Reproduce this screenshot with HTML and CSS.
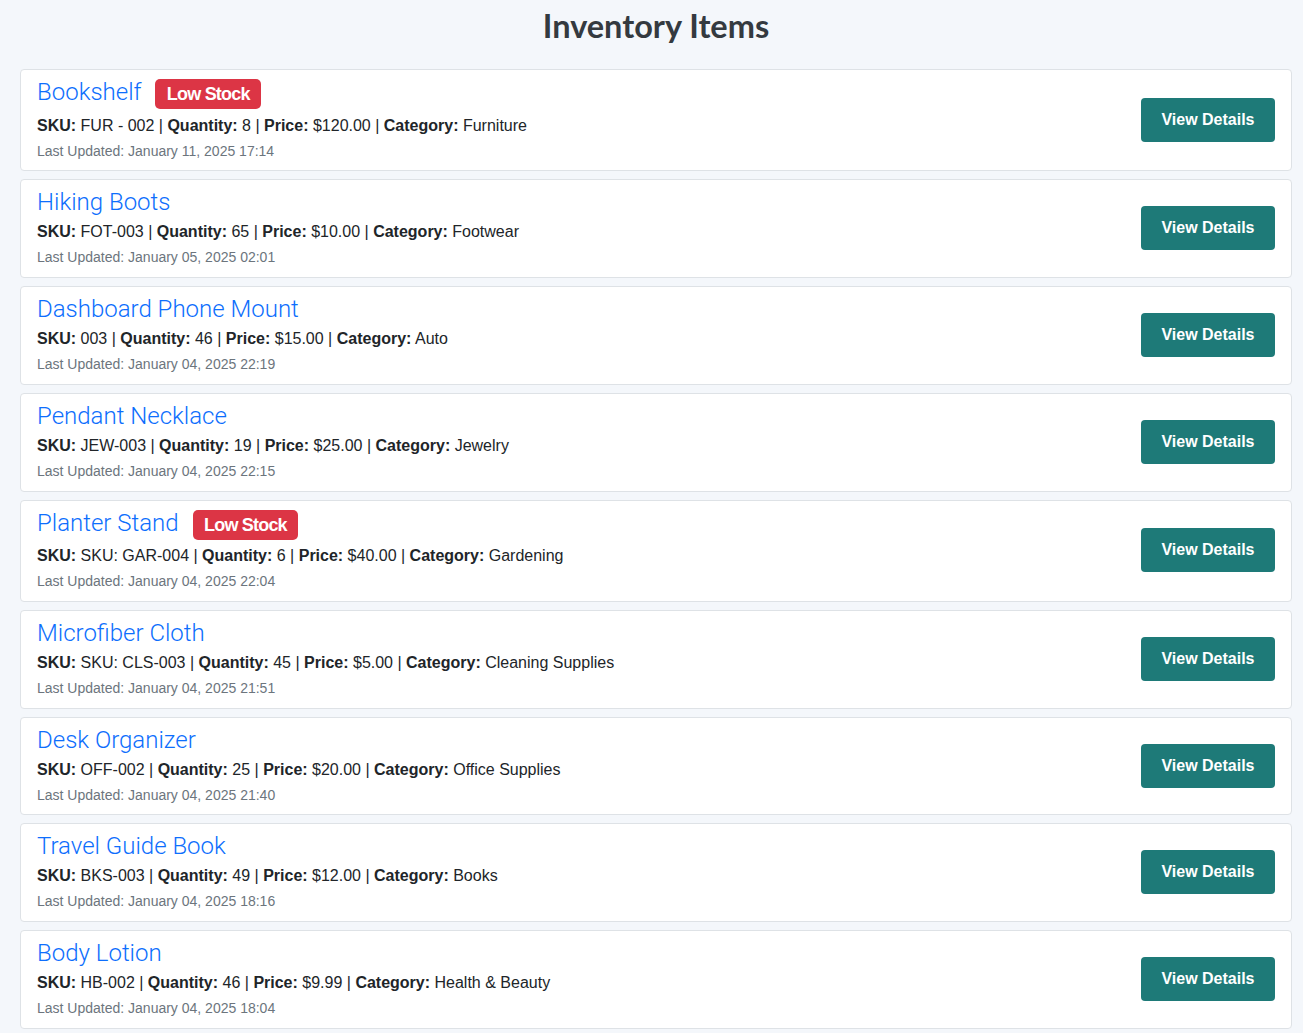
FILE: index.html
```html
<!DOCTYPE html>
<html lang="en">
<head>
<meta charset="utf-8">
<title>Inventory Items</title>
<link rel="stylesheet" href="styles.css">
</head>
<body>
<div class="page">
<h1 class="page-title">Inventory Items</h1>
<div class="list">
  <div class="card">
    <div class="info">
      <h3 class="name">Bookshelf <span class="badge">Low Stock</span></h3>
      <p class="details"><b>SKU:</b> FUR - 002 | <b>Quantity:</b> 8 | <b>Price:</b> $120.00 | <b>Category:</b> Furniture</p>
      <p class="updated">Last Updated: January 11, 2025 17:14</p>
    </div>
    <a class="btn" href="#">View Details</a>
  </div>
  <div class="card">
    <div class="info">
      <h3 class="name">Hiking Boots</h3>
      <p class="details"><b>SKU:</b> FOT-003 | <b>Quantity:</b> 65 | <b>Price:</b> $10.00 | <b>Category:</b> Footwear</p>
      <p class="updated">Last Updated: January 05, 2025 02:01</p>
    </div>
    <a class="btn" href="#">View Details</a>
  </div>
  <div class="card">
    <div class="info">
      <h3 class="name">Dashboard Phone Mount</h3>
      <p class="details"><b>SKU:</b> 003 | <b>Quantity:</b> 46 | <b>Price:</b> $15.00 | <b>Category:</b> Auto</p>
      <p class="updated">Last Updated: January 04, 2025 22:19</p>
    </div>
    <a class="btn" href="#">View Details</a>
  </div>
  <div class="card">
    <div class="info">
      <h3 class="name">Pendant Necklace</h3>
      <p class="details"><b>SKU:</b> JEW-003 | <b>Quantity:</b> 19 | <b>Price:</b> $25.00 | <b>Category:</b> Jewelry</p>
      <p class="updated">Last Updated: January 04, 2025 22:15</p>
    </div>
    <a class="btn" href="#">View Details</a>
  </div>
  <div class="card">
    <div class="info">
      <h3 class="name">Planter Stand <span class="badge">Low Stock</span></h3>
      <p class="details"><b>SKU:</b> SKU: GAR-004 | <b>Quantity:</b> 6 | <b>Price:</b> $40.00 | <b>Category:</b> Gardening</p>
      <p class="updated">Last Updated: January 04, 2025 22:04</p>
    </div>
    <a class="btn" href="#">View Details</a>
  </div>
  <div class="card">
    <div class="info">
      <h3 class="name">Microfiber Cloth</h3>
      <p class="details"><b>SKU:</b> SKU: CLS-003 | <b>Quantity:</b> 45 | <b>Price:</b> $5.00 | <b>Category:</b> Cleaning Supplies</p>
      <p class="updated">Last Updated: January 04, 2025 21:51</p>
    </div>
    <a class="btn" href="#">View Details</a>
  </div>
  <div class="card">
    <div class="info">
      <h3 class="name">Desk Organizer</h3>
      <p class="details"><b>SKU:</b> OFF-002 | <b>Quantity:</b> 25 | <b>Price:</b> $20.00 | <b>Category:</b> Office Supplies</p>
      <p class="updated">Last Updated: January 04, 2025 21:40</p>
    </div>
    <a class="btn" href="#">View Details</a>
  </div>
  <div class="card">
    <div class="info">
      <h3 class="name">Travel Guide Book</h3>
      <p class="details"><b>SKU:</b> BKS-003 | <b>Quantity:</b> 49 | <b>Price:</b> $12.00 | <b>Category:</b> Books</p>
      <p class="updated">Last Updated: January 04, 2025 18:16</p>
    </div>
    <a class="btn" href="#">View Details</a>
  </div>
  <div class="card">
    <div class="info">
      <h3 class="name">Body Lotion</h3>
      <p class="details"><b>SKU:</b> HB-002 | <b>Quantity:</b> 46 | <b>Price:</b> $9.99 | <b>Category:</b> Health &amp; Beauty</p>
      <p class="updated">Last Updated: January 04, 2025 18:04</p>
    </div>
    <a class="btn" href="#">View Details</a>
  </div>
</div>
</div>
</body>
</html>
```
FILE: styles.css
```css
* { box-sizing: border-box; }

body {
  margin: 0;
  background: #f4f7fb;
  font-family: "Liberation Sans", Arial, sans-serif;
  color: #212529;
}

.page {
  margin: 0 11px 0 20px;
}

.page-title {
  margin: 6px 0 24px;
  text-align: center;
  font-family: Lato, sans-serif;
  font-weight: 700;
  font-size: 32.5px;
  line-height: 1.2;
  color: #343a40;
}

.list {
  display: flex;
  flex-direction: column;
  gap: 8px;
}

.card {
  display: flex;
  align-items: center;
  justify-content: space-between;
  background: #fff;
  border: 1px solid #dee2e6;
  border-radius: 4px;
  padding: 8px 16px 8.75px;
}

.name {
  margin: 0 0 3px;
  font-family: Roboto, sans-serif;
  font-weight: 300;
  font-size: 24px;
  line-height: 29px;
  color: #0d6efd;
}

.badge {
  display: inline-block;
  margin: 0 0 1.5px 8px;
  padding: 6px 11.5px;
  font-family: "Liberation Sans", Arial, sans-serif;
  font-size: 18px;
  font-weight: 700;
  letter-spacing: -0.8px;
  line-height: 1;
  color: #fff;
  background: #dc3545;
  border-radius: 5px;
}

.details {
  margin: 0 0 3px;
  font-size: 16px;
  line-height: 24px;
}

.details b { font-weight: 700; }

.updated {
  margin: 0;
  font-size: 14px;
  line-height: 21px;
  color: #6c757d;
}

.btn {
  display: inline-block;
  padding: 10px 20.5px;
  font-size: 16px;
  font-weight: 700;
  line-height: 24px;
  color: #fff;
  background: #1e7a78;
  border-radius: 4px;
  text-decoration: none;
  white-space: nowrap;
}
```
